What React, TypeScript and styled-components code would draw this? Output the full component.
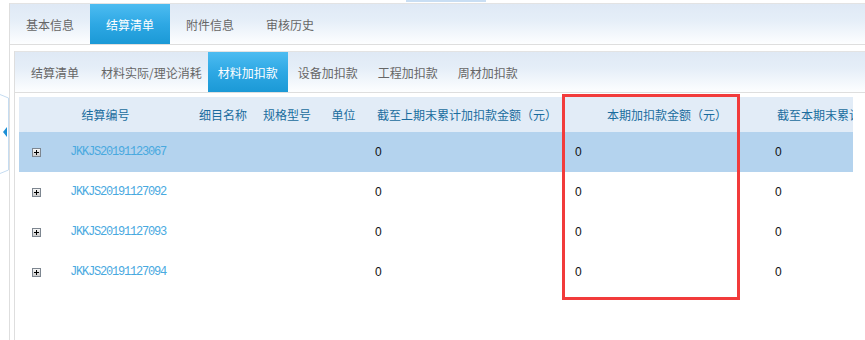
import React from "react";
import styled, { createGlobalStyle } from "styled-components";

const Global = createGlobalStyle`
  html, body { margin: 0; padding: 0; background: #fff; overflow: hidden; }
  body { font-family: "Noto Sans CJK SC", "Liberation Sans", sans-serif; font-size: 12px; }
`;

const Page = styled.div`
  position: relative;
  width: 865px;
  height: 340px;
  display: flex;
  flex-direction: column;
  overflow: hidden;
`;

const TopStrip = styled.div`
  height: 3px;
  flex: none;
  display: flex;
`;

const StripBlock = styled.div`
  margin-left: 406px;
  width: 80px;
  height: 2px;
  background: #c9def3;
`;

const Main = styled.div`
  flex: 1;
  display: flex;
  min-height: 0;
`;

const LeftRail = styled.div`
  width: 9px;
  flex: none;
  padding-top: 91px;
`;

const OuterPanel = styled.div`
  flex: 1;
  border-left: 1px solid #dedede;
  display: flex;
  flex-direction: column;
  min-width: 0;
`;

const TabBar = styled.div`
  display: flex;
  height: 40px;
  border-top: 1px solid #e3e3e3;
  border-bottom: 1px solid #dedede;
  background: linear-gradient(to bottom, #dfe9f5 0%, #e5eef8 40%, #fdfeff 100%);
  flex: none;
`;

const Tab = styled.div<{ $active?: boolean }>`
  min-width: 80px;
  padding: 0 6px;
  box-sizing: border-box;
  display: flex;
  align-items: center;
  justify-content: center;
  font-size: 12px;
  white-space: nowrap;
  color: ${(p) => (p.$active ? "#ffffff" : "#666666")};
  background: ${(p) =>
    p.$active ? "linear-gradient(to bottom, #4dbcf1 0%, #2ea8e4 50%, #1b99d6 100%)" : "transparent"};
`;

const SubPanel = styled.div`
  flex: 1;
  margin: 6px 0 0 4px;
  border-left: 1px solid #dedede;
  display: flex;
  flex-direction: column;
  min-height: 0;
`;

const Body = styled.div`
  padding: 4px 0 0 4px;
  flex: 1;
`;

const Grid = styled.div`
  width: 834px;
  overflow: hidden;
`;

const COLS = "173px 62px 66px 47px 200px 200px 200px";

const HeadRow = styled.div`
  display: grid;
  grid-template-columns: ${COLS};
  height: 35px;
  background: #e2ecf7;
`;

const HeadCell = styled.div`
  display: flex;
  align-items: center;
  justify-content: center;
  white-space: nowrap;
  color: #1a6c9e;
  font-size: 12px;
`;

const Row = styled.div<{ $selected?: boolean }>`
  display: grid;
  grid-template-columns: ${COLS};
  height: 40px;
  background: ${(p) => (p.$selected ? "#b4d3ee" : "#ffffff")};
`;

const KeyCell = styled.div`
  display: flex;
  align-items: center;
  gap: 29px;
  padding-left: 13px;
`;

const Cell = styled.div`
  display: flex;
  align-items: center;
  padding-left: 8px;
  font-family: "Liberation Sans", sans-serif;
  font-size: 12px;
  color: #111;
`;

const Code = styled.span`
  font-family: "Liberation Mono", monospace;
  font-size: 12px;
  letter-spacing: -1.2px;
  color: #49a9df;
`;

const Annotation = styled.div`
  position: absolute;
  left: 562px;
  top: 94px;
  width: 178px;
  height: 206px;
  box-sizing: border-box;
  border: 3px solid #f23b3b;
  pointer-events: none;
`;

const ExpandIcon = () => (
  <svg width="9" height="9" viewBox="0 0 9 9">
    <defs>
      <linearGradient id="eg" x1="0" y1="0" x2="0" y2="1">
        <stop offset="0" stopColor="#fafafa" />
        <stop offset="1" stopColor="#c9c9c9" />
      </linearGradient>
    </defs>
    <rect x="0.5" y="0.5" width="8" height="8" fill="url(#eg)" stroke="#7d8690" />
    <path d="M2 4.5 H7 M4.5 2 V7" stroke="#000" strokeWidth="1" />
  </svg>
);

const Handle = () => (
  <svg width="9" height="80" viewBox="0 0 9 80">
    <path d="M0 0.5 L8.5 4 L8.5 76 L0 79.5" fill="#ffffff" stroke="#c5dcf1" strokeWidth="1" />
    <path d="M7 33 L3 38 L7 43 Z" fill="#1b8fd6" />
  </svg>
);

const rows = [
  "JKKJS20191123067",
  "JKKJS20191127092",
  "JKKJS20191127093",
  "JKKJS20191127094",
];

export default function App() {
  return (
    <Page>
      <Global />
      <TopStrip>
        <StripBlock />
      </TopStrip>
      <Main>
        <LeftRail>
          <Handle />
        </LeftRail>
        <OuterPanel>
          <TabBar>
            <Tab>基本信息</Tab>
            <Tab $active>结算清单</Tab>
            <Tab>附件信息</Tab>
            <Tab>审核历史</Tab>
          </TabBar>
          <SubPanel>
            <TabBar>
              <Tab>结算清单</Tab>
              <Tab>材料实际/理论消耗</Tab>
              <Tab $active>材料加扣款</Tab>
              <Tab>设备加扣款</Tab>
              <Tab>工程加扣款</Tab>
              <Tab>周材加扣款</Tab>
            </TabBar>
            <Body>
              <Grid>
                <HeadRow>
                  <HeadCell>结算编号</HeadCell>
                  <HeadCell>细目名称</HeadCell>
                  <HeadCell>规格型号</HeadCell>
                  <HeadCell>单位</HeadCell>
                  <HeadCell>截至上期末累计加扣款金额（元）</HeadCell>
                  <HeadCell>本期加扣款金额（元）</HeadCell>
                  <HeadCell>截至本期末累计加扣款金额（元）</HeadCell>
                </HeadRow>
                {rows.map((code, i) => (
                  <Row key={code} $selected={i === 0}>
                    <KeyCell>
                      <ExpandIcon />
                      <Code>{code}</Code>
                    </KeyCell>
                    <Cell />
                    <Cell />
                    <Cell />
                    <Cell>0</Cell>
                    <Cell>0</Cell>
                    <Cell>0</Cell>
                  </Row>
                ))}
              </Grid>
            </Body>
          </SubPanel>
        </OuterPanel>
      </Main>
      <Annotation />
    </Page>
  );
}
